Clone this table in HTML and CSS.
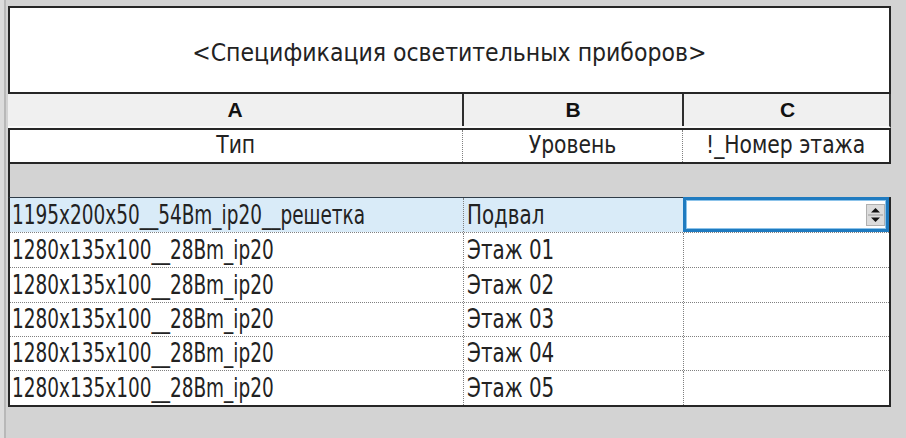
FILE: index.html
```html
<!DOCTYPE html>
<html lang="ru">
<head>
<meta charset="utf-8">
<title>Спецификация осветительных приборов</title>
<link rel="stylesheet" href="styles.css">
</head>
<body>
<div class="sheet">
  <div class="title"><span class="tt">&lt;Спецификация осветительных приборов&gt;</span></div>
  <div class="colhead">
    <div class="hcell">A</div>
    <div class="hcell">B</div>
    <div class="hcell">C</div>
  </div>
  <div class="labels">
    <div class="lcell"><span class="lt">Тип</span></div>
    <div class="lcell"><span class="lt">Уровень</span></div>
    <div class="lcell"><span class="lt">!_Номер этажа</span></div>
  </div>
  <div class="gap"></div>
  <div class="body">
    <div class="row selected">
      <div class="cell ca"><span class="t">1195x200x50__54Bm_ip20__решетка</span></div>
      <div class="cell cb"><span class="t">Подвал</span></div>
      <div class="cell editcell">
        <div class="editor">
          <span class="spin">
            <svg width="19" height="22" viewBox="0 0 19 22">
              <rect x="0.5" y="0.5" width="18" height="21" fill="#dcdcdc" stroke="#b0b0b0"/>
              <line x1="2" y1="11" x2="17" y2="11" stroke="#9a9a9a"/>
              <path d="M5 8.5 L9.5 4 L14 8.5 Z" fill="#111"/>
              <path d="M5 13.5 L9.5 18 L14 13.5 Z" fill="#111"/>
            </svg>
          </span>
        </div>
      </div>
    </div>
    <div class="row r2">
      <div class="cell ca"><span class="t">1280x135x100__28Bm_ip20</span></div>
      <div class="cell cb"><span class="t">Этаж 01</span></div>
      <div class="cell"></div>
    </div>
    <div class="row r3">
      <div class="cell ca"><span class="t">1280x135x100__28Bm_ip20</span></div>
      <div class="cell cb"><span class="t">Этаж 02</span></div>
      <div class="cell"></div>
    </div>
    <div class="row r4">
      <div class="cell ca"><span class="t">1280x135x100__28Bm_ip20</span></div>
      <div class="cell cb"><span class="t">Этаж 03</span></div>
      <div class="cell"></div>
    </div>
    <div class="row r5">
      <div class="cell ca"><span class="t">1280x135x100__28Bm_ip20</span></div>
      <div class="cell cb"><span class="t">Этаж 04</span></div>
      <div class="cell"></div>
    </div>
    <div class="row r6 last">
      <div class="cell ca"><span class="t">1280x135x100__28Bm_ip20</span></div>
      <div class="cell cb"><span class="t">Этаж 05</span></div>
      <div class="cell"></div>
    </div>
  </div>
</div>
</body>
</html>
```

FILE: styles.css
```css
* { box-sizing: border-box; }

html, body {
  margin: 0;
  padding: 0;
}

body {
  width: 906px;
  height: 438px;
  overflow: hidden;
  background: linear-gradient(to right, #dcdcdc 0 4px, #b8b8b8 4px 6px, #d3d3d3 6px);
  font-family: "DejaVu Sans Condensed", "DejaVu Sans", sans-serif;
  color: #222;
}

.sheet {
  margin: 6px 0 0 8px;
  width: 883px;
  display: flex;
  flex-direction: column;
}

.title {
  height: 88px;
  border: 2px solid #262626;
  background: #fff;
  display: flex;
  align-items: center;
  justify-content: center;
  font-size: 25px;
  padding-top: 5px;
}

.tt {
  display: inline-block;
  transform: scaleX(0.98);
}

.colhead {
  height: 34px;
  display: grid;
  grid-template-columns: 454px 220px 209px;
  background: #f0f0f0;
  border-right: 2px solid #3a3a3a;
  border-bottom: 2px solid #fafafa;
}

.hcell {
  display: flex;
  align-items: center;
  justify-content: center;
  font-family: "Liberation Sans", Arial, sans-serif;
  font-weight: bold;
  font-size: 21px;
  color: #111;
  padding-bottom: 1px;
}

.hcell + .hcell {
  border-left: 2px solid #2e2e2e;
}

.labels {
  height: 36px;
  display: grid;
  grid-template-columns: 452px 220px 207px;
  border: 2px solid #262626;
  background: #fff;
}

.lcell {
  display: flex;
  align-items: center;
  justify-content: center;
  font-size: 24px;
  padding-bottom: 2px;
}

.lt {
  display: inline-block;
  transform: scaleX(0.94);
}

.lcell + .lcell {
  border-left: 1px dotted #808080;
}

.gap {
  height: 33px;
  border-left: 2px solid #262626;
}

.body {
  border-top: 1px solid #2f3c48;
  border-left: 2px solid #262626;
  border-right: 2px solid #262626;
  border-bottom: 2px solid #262626;
  background: #fff;
}

.row {
  display: grid;
  grid-template-columns: 453px 220px 206px;
  height: 35px;
  border-bottom: 1px dotted #808080;
}

.row.r4, .row.r5 { height: 34px; }
.row.r6 { height: 34px; }
.row.last { border-bottom: none; }

.cell {
  display: flex;
  align-items: center;
  padding: 0 0 1px 2px;
  font-size: 26px;
  white-space: nowrap;
  overflow: hidden;
}

.t {
  display: inline-block;
  transform-origin: left center;
}

.ca .t { transform: scaleX(0.79); }
.cb .t { transform: scaleX(0.85); }

.cell + .cell {
  border-left: 1px dotted #808080;
}

.cb {
  padding-left: 3px;
}

.selected .cell {
  background: #d9ebf8;
}

.selected .editcell {
  background: #fff;
  padding: 0;
  border-left: none;
  margin-top: -1px;
  height: 35px;
}

.editor {
  width: 100%;
  height: 100%;
  border: 3px solid #1f7bc0;
  box-shadow: inset 0 0 0 1px #8cc3ea;
  display: flex;
  align-items: center;
  justify-content: flex-end;
  padding-right: 1px;
}

.spin {
  display: flex;
  width: 19px;
  height: 22px;
}
```
